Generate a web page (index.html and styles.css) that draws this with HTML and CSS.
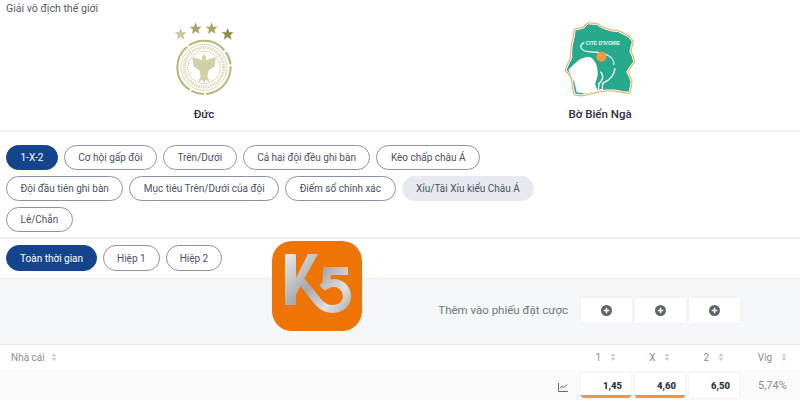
FILE: index.html
```html
<!DOCTYPE html>
<html>
<head>
    <title>Đức - Bờ Biển Ngà</title>
    <link rel="stylesheet" href="styles.css">
</head>
<body>
    <div class="page">
        <div class="match">
            <div class="league">Giải vô địch thế giới</div>
            <div class="teams">
                <div class="team">
                    <svg class="crest" viewBox="0 0 270 255">
                        <g fill="#a9a564" transform="translate(3,-3)">
                            <polygon points="62,42 67,55 80,55 70,64 74,77 62,69 50,77 54,64 44,55 57,55" fill="#c9c6a0"/>
                            <polygon points="107,25 112,38 125,38 115,47 119,60 107,52 95,60 99,47 89,38 102,38"/>
                            <polygon points="155,25 160,38 173,38 163,47 167,60 155,52 143,60 147,47 137,38 150,38"/>
                            <polygon points="203,42 208,55 221,55 211,64 215,77 203,69 191,77 195,64 185,55 198,55" fill="#8f8c4e"/>
                        </g>
                        <circle cx="135" cy="157" r="80" fill="none" stroke="#b8b577" stroke-width="6" stroke-dasharray="118 6 40 6 150 6"/>
                        <circle cx="135" cy="157" r="69" fill="none" stroke="#c6c38e" stroke-width="2"/>
                        <circle cx="135" cy="157" r="59" fill="none" stroke="#dbd9b8" stroke-width="10" stroke-dasharray="4 3"/>
                        <circle cx="135" cy="157" r="49" fill="#fff" stroke="#c6c38e" stroke-width="2"/>
                        <path d="M135 118 l7 8 l-2 10 l30 -10 l-3 28 l-18 12 l-4 18 l8 18 l-12 -8 l-6 10 l-6 -10 l-12 8 l8 -18 l-4 -18 l-18 -12 l-3 -28 l30 10 l-2 -10z" fill="#d2d0a6"/>
                    </svg>
                    <div class="team-name">Đức</div>
                </div>
                <div class="team">
                    <svg class="crest" viewBox="0 0 270 255">
                        <path d="M60 45 L75 42 L88 38 L100 26 L112 28 L125 28 L140 38 L150 42 L170 48 L190 50 L205 58 L220 65 L232 80 L228 95 L225 110 L232 125 L236 140 L225 155 L215 170 L222 185 L228 200 L226 215 L222 232 L205 230 L180 225 L155 225 L130 228 L105 235 L80 240 L60 237 L55 215 L52 190 L42 175 L33 165 L42 145 L50 130 L50 110 L52 90 L58 65z" fill="#27a98b" stroke="#f2a65c" stroke-width="9" stroke-linejoin="round"/>
                        <path d="M60 45 L75 42 L88 38 L100 26 L112 28 L125 28 L140 38 L150 42 L170 48 L190 50 L205 58 L220 65 L232 80 L228 95 L225 110 L232 125 L236 140 L225 155 L215 170 L222 185 L228 200 L226 215 L222 232 L205 230 L180 225 L155 225 L130 228 L105 235 L80 240 L60 237 L55 215 L52 190 L42 175 L33 165 L42 145 L50 130 L50 110 L52 90 L58 65z" fill="#27a98b" stroke="#fff" stroke-width="3" stroke-linejoin="round"/>
                        <path d="M40 165 C55 150 70 128 100 125 C118 128 128 150 128 172 C130 190 118 200 122 212 L128 228 L90 236 L65 232 L58 200z" fill="#fff"/>
                        <path d="M136 170 C150 185 140 200 132 205 L130 226 L142 224 L143 205 C165 195 178 180 180 160" fill="none" stroke="#fff" stroke-width="4"/>
                        <path d="M88 82 C70 92 74 110 110 111 C150 112 180 125 176 150" fill="none" stroke="#dff3ee" stroke-width="4"/>
                        <text class="crest-label" x="92" y="91">CITE D'IVOIRE</text>
                        <circle cx="139" cy="125" r="15" fill="#f59a3c"/>
                    </svg>
                    <div class="team-name">Bờ Biển Ngà</div>
                </div>
            </div>
        </div>

        <div class="markets">
            <button class="chip active">1-X-2</button>
            <button class="chip">Cơ hội gấp đôi</button>
            <button class="chip">Trên/Dưới</button>
            <button class="chip">Cả hai đội đều ghi bàn</button>
            <button class="chip">Kèo chấp châu Á</button>
            <button class="chip">Đội đầu tiên ghi bàn</button>
            <button class="chip">Mục tiêu Trên/Dưới của đội</button>
            <button class="chip">Điểm số chính xác</button>
            <button class="chip soft">Xỉu/Tài Xỉu kiểu Châu Á</button>
            <button class="chip">Lẻ/Chẵn</button>
        </div>

        <div class="periods">
            <button class="chip large active">Toàn thời gian</button>
            <button class="chip large">Hiệp 1</button>
            <button class="chip large">Hiệp 2</button>
        </div>

        <div class="slip">
            <span class="slip-label">Thêm vào phiếu đặt cược</span>
            <div class="cells">
                <div class="slip-cell"><svg class="plus" viewBox="0 0 12 12"><circle cx="6" cy="6" r="6" fill="#5f646b"/><path d="M6 3v6M3 6h6" stroke="#fff" stroke-width="1.6"/></svg></div>
                <div class="slip-cell"><svg class="plus" viewBox="0 0 12 12"><circle cx="6" cy="6" r="6" fill="#5f646b"/><path d="M6 3v6M3 6h6" stroke="#fff" stroke-width="1.6"/></svg></div>
                <div class="slip-cell"><svg class="plus" viewBox="0 0 12 12"><circle cx="6" cy="6" r="6" fill="#5f646b"/><path d="M6 3v6M3 6h6" stroke="#fff" stroke-width="1.6"/></svg></div>
            </div>
        </div>

        <div class="table-head">
            <div class="bookmaker">Nhà cái <svg class="sort" viewBox="0 0 7 10"><path d="M3.5 0L6.5 4H.5zM3.5 10L.5 6h6z"/></svg></div>
            <div class="col">1 <svg class="sort" viewBox="0 0 7 10"><path d="M3.5 0L6.5 4H.5zM3.5 10L.5 6h6z"/></svg></div>
            <div class="col">X <svg class="sort" viewBox="0 0 7 10"><path d="M3.5 0L6.5 4H.5zM3.5 10L.5 6h6z"/></svg></div>
            <div class="col">2 <svg class="sort" viewBox="0 0 7 10"><path d="M3.5 0L6.5 4H.5zM3.5 10L.5 6h6z"/></svg></div>
            <div class="col vig">Vig <svg class="sort" viewBox="0 0 7 10"><path d="M3.5 0L6.5 4H.5zM3.5 10L.5 6h6z"/></svg></div>
        </div>

        <div class="table-row">
            <svg class="chart" viewBox="0 0 10 9"><path d="M.5 0v8.500H10M2 5.500L4 3l2 1.500L9 1.500" fill="none" stroke="#5f6b7a" stroke-width="1"/></svg>
            <div class="odd hot">1,45</div>
            <div class="odd hot">4,60</div>
            <div class="odd">6,50</div>
            <div class="vig-value">5,74%</div>
        </div>

        <svg class="k5-logo" viewBox="0 0 90 90">
            <defs>
                <linearGradient id="metal" gradientUnits="userSpaceOnUse" x1="13" y1="13" x2="78" y2="72">
                    <stop offset="0" stop-color="#ececec"/>
                    <stop offset="0.45" stop-color="#a8a8a8"/>
                    <stop offset="0.75" stop-color="#e0e0e0"/>
                    <stop offset="1" stop-color="#adadad"/>
                </linearGradient>
            </defs>
            <rect width="90" height="90" rx="20" fill="#ee7405"/>
            <path d="M13 13H24V37L36 13H46L32 38L24 54V64H13z" fill="url(#metal)"/>
            <path d="M29 40C40 50 46 68 60 68C70 68 75 62 75 55C75 47 68 42 62 42C57 42 53 44 50 47M54 47L55 30H76" fill="none" stroke="url(#metal)" stroke-width="8"/>
        </svg>
    </div>
</body>
</html>
```

FILE: styles.css
```css
* {
    box-sizing: border-box;
}

body {
    margin: 0;
    font-family: Roboto, "Liberation Sans", sans-serif;
    background-color: #fff;
}

.page {
    position: relative;
    width: 800px;
    height: 400px;
    overflow: hidden;
}

.match {
    height: 132px;
    border-bottom: 2px solid #eef0f3;
}

.league {
    height: 15px;
    padding: 2px 0 0 6px;
    font-size: 10.6px;
    line-height: 13px;
    color: #555b66;
}

.teams {
    display: grid;
    grid-template-columns: 396px 396px;
    padding-left: 6px;
}

.team {
    display: flex;
    flex-direction: column;
    align-items: center;
}

.crest {
    width: 90px;
    height: 85px;
}

.crest-label {
    font-size: 15px;
    font-family: "Liberation Sans", sans-serif;
    font-weight: bold;
    fill: #e8f7f3;
}

.team-name {
    margin-top: 6px;
    font-size: 11.5px;
    line-height: 16px;
    font-weight: 500;
    color: #2a2f3c;
}

.markets {
    display: flex;
    flex-wrap: wrap;
    gap: 6px;
    height: 107px;
    padding: 13px 260px 0 6px;
    align-content: flex-start;
    border-bottom: 2px solid #eef0f3;
}

.periods {
    display: flex;
    gap: 6px;
    height: 39px;
    padding: 6px 6px 0;
}

.chip {
    height: 25px;
    padding: 0 13.500px;
    border: 1px solid #8b90ad;
    border-radius: 13px;
    background-color: #fff;
    color: #4c5262;
    font-family: inherit;
    font-size: 10px;
    white-space: nowrap;
}

.chip.large {
    height: 26px;
    padding: 0 13px;
}

.chip.active {
    border-color: #14458c;
    background-color: #14458c;
    color: #fff;
}

.chip.soft {
    border-color: #e6e9f0;
    background-color: #e6e9f0;
}

.slip {
    display: flex;
    justify-content: flex-end;
    align-items: center;
    height: 67px;
    padding: 0 60px 3px 0;
    background-color: #f6f7f9;
    border-top: 1px solid #eef0f3;
    border-bottom: 1px solid #e6e8ec;
}

.slip-label {
    margin-right: 13px;
    font-size: 11.5px;
    color: #70757d;
}

.cells {
    display: flex;
    gap: 3px;
}

.slip-cell {
    display: flex;
    justify-content: center;
    align-items: center;
    width: 51px;
    height: 25px;
    background-color: #fff;
    box-shadow: 0 0 2px #e4e6ea;
}

.plus {
    width: 11px;
    height: 11px;
}

.table-head {
    display: flex;
    align-items: center;
    height: 25px;
    padding: 0 0 0 11px;
    font-size: 10px;
    color: #8a8f96;
}

.bookmaker {
    width: 573px;
}

.col {
    width: 54.500px;
    text-align: center;
}

.col.vig {
    width: 60px;
    padding-left: 4px;
}

.sort {
    width: 6px;
    height: 8px;
    margin-left: 6px;
    fill: #c9ccd1;
}

.bookmaker .sort {
    margin-left: 4px;
}

.table-row {
    display: flex;
    align-items: flex-start;
    height: 30px;
    padding: 3px 0 0 558px;
    background-color: #fafafa;
}

.chart {
    width: 10px;
    height: 9px;
    margin: 10px 13px 0 0;
}

.odd {
    width: 50px;
    height: 25px;
    margin-right: 4px;
    padding-right: 9px;
    background-color: #fff;
    font-size: 9.500px;
    font-weight: 900;
    line-height: 25px;
    text-align: right;
    color: #33373d;
    box-shadow: 0 0 2px #e4e6ea;
}

.odd.hot {
    border-bottom: 3px solid #ee9444;
    border-radius: 3px;
}

.vig-value {
    margin: 6px 0 0 15px;
    font-size: 11px;
    color: #8a8e94;
}

/* logo lies over the page */
.k5-logo {
    position: absolute;
    left: 272px;
    top: 241px;
    width: 90px;
    height: 90px;
}
```
